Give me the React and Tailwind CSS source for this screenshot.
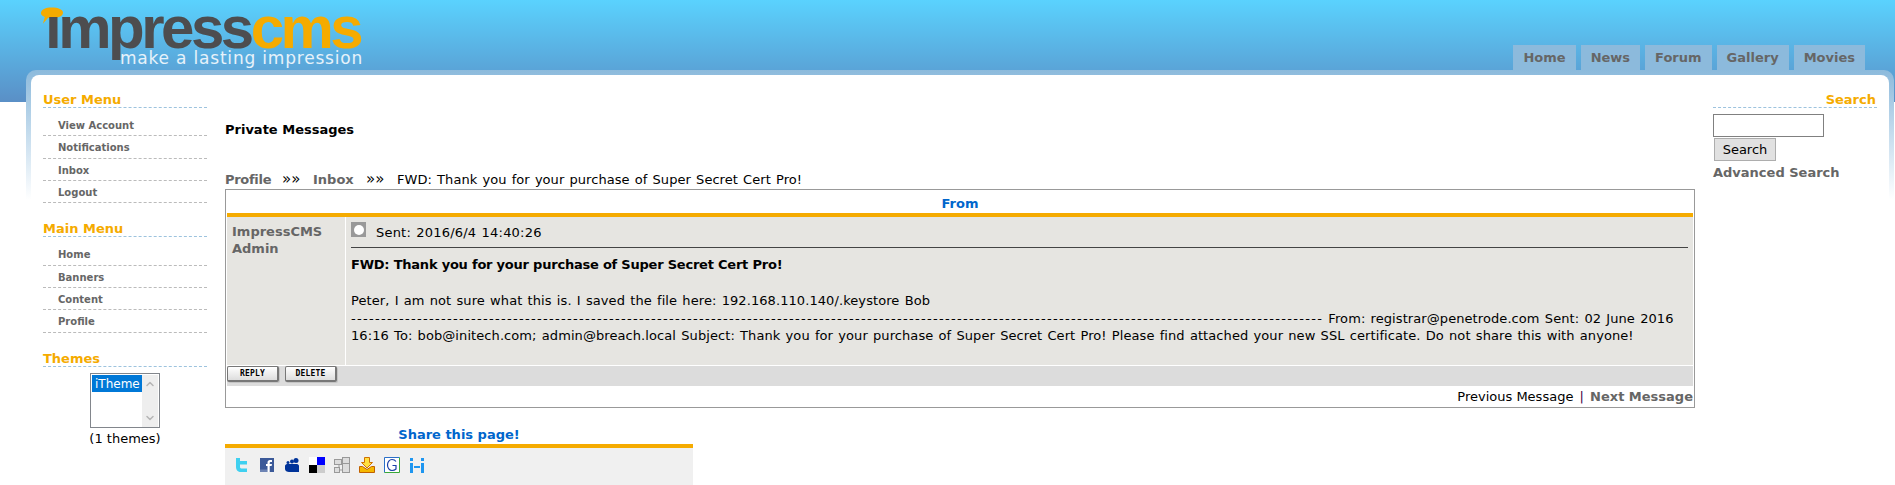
import React from "react";
import { ChevronUp, ChevronDown } from "lucide-react";

const userMenu = ["View Account", "Notifications", "Inbox", "Logout"];
const mainMenu = ["Home", "Banners", "Content", "Profile"];
const tabs = ["Home", "News", "Forum", "Gallery", "Movies"];

function BlockTitle({ children, right }) {
  return (
    <div className={`h-[20px] border-b border-dashed border-[#9dc3de] text-[13px] leading-[23px] font-bold text-[#f5ab00] ${right ? "text-right pr-[1px]" : ""}`}>
      {children}
    </div>
  );
}

function Menu({ items }) {
  return (
    <div className="mt-[6px]">
      {items.map((item) => (
        <div key={item} className="h-[22.33px] border-b border-dashed border-[#bbbbbb] pl-[15px] text-[10px] leading-[23px] font-bold text-[#666666]">
          {item}
        </div>
      ))}
    </div>
  );
}

function Logo() {
  return (
    <div className="relative ml-[40px] h-[70px] w-[330px] font-['Liberation_Sans',sans-serif]">
      <svg className="absolute left-[0px] top-[7px]" width="23" height="18" viewBox="0 0 24 18">
        <path d="M1 6C1 2 6 0 12 0c7 0 12 2 12 5.500S19 11 12 11c-1.500 0-2.500 0-3.500-.2L3 17l2-7C3 9 1 8 1 6z" fill="#f5ab00" />
      </svg>
      <div className="absolute left-[5px] top-0 text-[60px] leading-[56px] font-bold tracking-[-3.5px] whitespace-nowrap">
        <span className="text-[#4d4d4f]">ımpress</span>
        <span className="text-[#f5ab00]">cms</span>
      </div>
      <div className="absolute left-[80px] top-[48px] font-['DejaVu_Sans',sans-serif] text-[17px] leading-[20px] text-[#e6f2fa] tracking-[0.8px] whitespace-nowrap">
        make a lasting impression
      </div>
    </div>
  );
}

function ShareIcons() {
  return (
    <div className="flex items-center pl-[10px] pt-[9px]">
      {/* twitter */}
      <svg className="w-[14px] h-[16px] mr-[11px]" viewBox="0 0 14 16">
        <path d="M1 1h4v3h7v3.500H5V10c0 1 1 1.500 2 1.500h5V15H6C3 15 1 13 1 10z" fill="#3fd0f0" />
      </svg>
      {/* facebook */}
      <svg className="w-[14px] h-[14px] mr-[11px]" viewBox="0 0 14 14">
        <rect width="14" height="14" fill="#3b5998" />
        <rect y="11.500" width="7.500" height="2.500" fill="#6d84b4" />
        <path d="M7.500 14V8H6V6h1.500V4.500C7.500 3 8.500 2 10 2h2v2h-1.300c-.7 0-1 .3-1 .9V6H12l-.4 2H9.700v6z" fill="#fff" />
      </svg>
      {/* myspace */}
      <svg className="w-[14px] h-[14px] mr-[10px]" viewBox="0 0 14 14">
        <circle cx="11" cy="2.500" r="2.500" fill="#003399" />
        <circle cx="7" cy="3.500" r="2" fill="#003399" />
        <circle cx="3" cy="4.500" r="1.500" fill="#003399" />
        <path d="M0 8c0-1 1-2 2-2h10c1 0 2 1 2 2v6H4c-2 0-4-1-4-3z" fill="#003399" />
      </svg>
      {/* delicious */}
      <svg className="w-[16px] h-[16px] mr-[9px]" viewBox="0 0 16 16">
        <rect width="8" height="8" fill="#fff" />
        <rect x="8" width="8" height="8" fill="#0000ff" />
        <rect y="8" width="8" height="8" fill="#000" />
        <rect x="8" y="8" width="8" height="8" fill="#cccccc" />
      </svg>
      {/* bookmarks */}
      <svg className="w-[16px] h-[16px] mr-[9px]" viewBox="0 0 16 16">
        <g fill="#ddd" stroke="#999">
          <rect x="8.500" y="0.500" width="7" height="6" />
          <rect x="0.500" y="2.500" width="7" height="5" />
          <rect x="8.500" y="6.500" width="7" height="9" />
          <rect x="0.500" y="10.500" width="5" height="5" />
          <path d="M5 7.500v3M5.500 13h3" />
        </g>
      </svg>
      {/* digg download */}
      <svg className="w-[16px] h-[16px] mr-[9px]" viewBox="0 0 16 16">
        <path d="M.5 9.500h3l4.500 3 4.500-3h3v6H.5z" fill="#f5b800" stroke="#c06000" />
        <path d="M5.500.5h5v5h3L8 11 2.500 5.500h3z" fill="#ffe040" stroke="#d07000" />
      </svg>
      {/* google */}
      <svg className="w-[16px] h-[16px] mr-[10px]" viewBox="0 0 16 16">
        <rect x="1" y="1" width="14" height="14" fill="#fff" />
        <path d="M.5 15.500V.5h15" stroke="#2a6fc9" fill="none" />
        <path d="M.5 15.500h15V.5" stroke="#3aa83a" fill="none" />
        <path d="M12 4.500C11 3 9.500 2.500 8 2.500 5.500 2.500 3.500 5 3.500 8s2 5.500 4.500 5.500c1.500 0 3-.5 4-1.500V8.500H8.500" fill="none" stroke="#1a3fa8" strokeWidth="1.200" />
      </svg>
      {/* i-i */}
      <svg className="w-[14px] h-[15px]" viewBox="0 0 14 15">
        <g fill="#1e96f0">
          <rect x="0" y="0" width="3" height="3" />
          <rect x="0" y="5" width="3" height="10" />
          <rect x="11" y="0" width="3" height="3" />
          <rect x="11" y="5" width="3" height="10" />
          <rect x="4" y="8" width="6" height="2" />
        </g>
      </svg>
    </div>
  );
}

function PixelButton({ children }) {
  return (
    <div className="h-[16px] w-[52px] rounded-[2px] border border-[#777777] border-b-2 border-r-2 bg-[linear-gradient(#ffffff,#dddddd)] text-center font-['DejaVu_Sans_Mono',monospace] text-[8px] font-bold leading-[13px] text-black tracking-[0.2px] shadow-[1px_1px_0_#c4c4c4]">
      {children}
    </div>
  );
}

export default function App() {
  return (
    <div className="h-[485px] overflow-hidden bg-white bg-[linear-gradient(#5ad2fe,#5a8fc6)] bg-[length:100%_102px] bg-no-repeat font-['DejaVu_Sans',sans-serif] text-black">
      <div className="flex h-[70px] justify-between">
        <Logo />
        <div className="mr-[30px] flex items-end gap-[5px]">
          {tabs.map((t) => (
            <div key={t} className="flex h-[25px] items-center bg-[#8cbadc] px-[10px] text-[13px] font-bold text-[#666666]">
              {t}
            </div>
          ))}
        </div>
      </div>

      <div className="ml-[26px] mr-[1px] rounded-tl-[10px] rounded-tr-[10px] bg-[linear-gradient(#8cbadc,#ffffff_130px)] px-[5px] pt-[5px]">
        <div className="flex h-[410px] rounded-tl-[8px] rounded-tr-[8px] bg-white px-[12px] pt-[13px]">
          {/* left column */}
          <div className="w-[164px] shrink-0">
            <BlockTitle>User Menu</BlockTitle>
            <Menu items={userMenu} />
            <div className="mt-[14px]">
              <BlockTitle>Main Menu</BlockTitle>
              <Menu items={mainMenu} />
            </div>
            <div className="mt-[14px]">
              <BlockTitle>Themes</BlockTitle>
              <div className="mt-[6px] flex flex-col items-center">
                <div className="flex h-[55px] w-[70px] border border-[#82868c] bg-white pl-[1px] pr-[1px] pt-[1px]">
                  <div className="h-[17px] w-[51px] bg-[#0078d7] pl-[3px] text-[12px] leading-[19px] text-white">iTheme</div>
                  <div className="ml-auto flex w-[16px] flex-col items-center justify-between bg-[#eeeeee] py-[3px] text-[#b5b5b5]">
                    <ChevronUp size={12} strokeWidth={3} />
                    <ChevronDown size={12} strokeWidth={3} />
                  </div>
                </div>
                <div className="mt-[1px] text-[13px] leading-[19px]">(1 themes)</div>
              </div>
            </div>
          </div>

          {/* center column */}
          <div className="ml-[18px] w-[1470px] shrink-0">
            <div className="mt-[33px] text-[13px] leading-[18px] font-bold">Private Messages</div>
            <div className="mt-[32px] flex h-[18px] whitespace-nowrap text-[13px] leading-[18px]">
              <span className="w-[46px] font-bold tracking-[-0.3px] text-[#666666]">Profile</span>
              <span className="ml-[11px] w-[20px] text-[15px] leading-[17px]">»»</span>
              <span className="ml-[11px] w-[42px] font-bold text-[#666666]">Inbox</span>
              <span className="ml-[11px] w-[20px] text-[15px] leading-[17px]">»»</span>
              <span className="ml-[11px] tracking-[0.05px] [word-spacing:1px]">FWD: Thank you for your purchase of Super Secret Cert Pro!</span>
            </div>
            <div className="border border-[#999999] px-[1px]">
              <div className="h-[23px] text-center text-[13px] leading-[27px] font-bold text-[#0066cc]">From</div>
              <div className="h-[4px] bg-[#f5ab00]" />
              <div className="flex h-[148px] bg-[#e6e5e1]">
                <div className="w-[119px] shrink-0 border-r border-white pl-[5px] pt-[6px] pr-[10px] text-[13px] leading-[17px] font-bold text-[#666666]">
                  ImpressCMS Admin
                </div>
                <div className="flex-1 px-[5px] pt-[5px] text-[13px]">
                  <div className="flex h-[26px] border-b border-[#444444]">
                    <div className="flex h-[15px] w-[15px] items-center justify-center bg-[#999999]">
                      <div className="h-[10px] w-[10px] rounded-full bg-white" />
                    </div>
                    <span className="ml-[10px] leading-[21px] tracking-[0.2px] [word-spacing:1px]">Sent: 2016/6/4 14:40:26</span>
                  </div>
                  <div className="mt-[8px] leading-[18px] font-bold tracking-[-0.22px]">FWD: Thank you for your purchase of Super Secret Cert Pro!</div>
                  <div className="mt-[18px] leading-[17.5px] tracking-[0.08px] [word-spacing:1px]">
                    Peter, I am not sure what this is. I saved the file here: 192.168.110.140/.keystore Bob
                    <br />
                    <span className="tracking-[1.31px]">{"-".repeat(162)}</span> From: registrar@penetrode.com Sent: 02 June 2016 16:16 To: bob@initech.com; admin@breach.local Subject: Thank you for your purchase of Super Secret Cert Pro! Please find attached your new SSL certificate. Do not share this with anyone!
                  </div>
                </div>
              </div>
              <div className="mt-[1px] flex h-[20px] gap-[6px] bg-[#dcdcdc]">
                <PixelButton>REPLY</PixelButton>
                <PixelButton>DELETE</PixelButton>
              </div>
              <div className="h-[21px] text-right text-[13px] leading-[22px]">
                Previous Message <span className="mx-[2px] text-[#440044]">|</span> <span className="font-bold text-[#666666]">Next Message</span>
              </div>
            </div>
            <div className="w-[468px]">
              <div className="mt-[18px] text-center text-[13px] leading-[18px] font-bold text-[#0066cc]">Share this page!</div>
              <div className="h-[4px] bg-[#f5ab00]" />
              <div className="h-[60px] bg-[#f0f0f0]">
                <ShareIcons />
              </div>
            </div>
          </div>

          {/* right column */}
          <div className="ml-[18px] w-[164px] shrink-0">
            <BlockTitle right>Search</BlockTitle>
            <div className="mt-[6px] h-[23px] w-[111px] border border-[#808080] bg-white" />
            <div className="ml-[1px] mt-[1px] h-[23px] w-[62px] border border-[#adadad] bg-[#e1e1e1] text-center text-[13px] leading-[21px]">Search</div>
            <div className="mt-[3px] text-[13px] leading-[18px] font-bold text-[#666666]">Advanced Search</div>
          </div>
        </div>
      </div>
    </div>
  );
}
